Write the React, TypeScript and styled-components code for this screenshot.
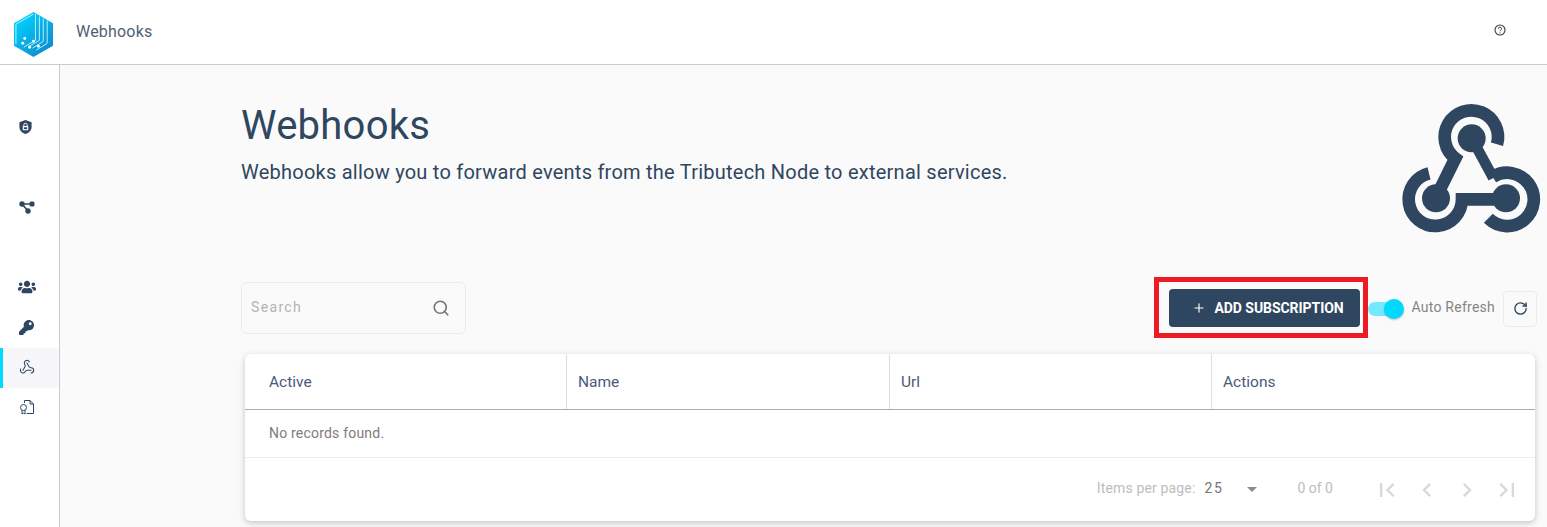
import React from 'react';
import styled, { createGlobalStyle } from 'styled-components';
import { FaKey, FaUsers } from 'react-icons/fa';
import { MdChevronLeft, MdChevronRight, MdFirstPage, MdLastPage } from 'react-icons/md';
import { Plus, RotateCw, Search, Webhook } from 'lucide-react';

const navy = '#2f4660';

const GlobalStyle = createGlobalStyle`
  html, body {
    margin: 0;
    height: 100%;
    overflow: hidden;
    background: #fafafa;
    font-family: Roboto, "Liberation Sans", sans-serif;
  }
  * { box-sizing: border-box; }
`;

const Shell = styled.div`
  height: 527px;
  display: flex;
  flex-direction: column;
`;

const TopBar = styled.header`
  height: 65px;
  flex: none;
  background: #fff;
  border-bottom: 1px solid #ccc;
  display: flex;
  align-items: center;
  padding: 0 41px 2px 13px;
`;

const LogoSlot = styled.div`
  display: flex;
  margin-top: 6px;
`;

const PageName = styled.span`
  margin-left: 22px;
  font-size: 16px;
  letter-spacing: 0.2px;
  color: #4f6275;
`;

const HelpButton = styled.button`
  margin: 0 0 2px auto;
  border: 0;
  padding: 0;
  background: none;
  display: flex;
`;

const Body = styled.div`
  flex: 1;
  display: flex;
  min-height: 0;
`;

const SideNav = styled.nav`
  width: 60px;
  flex: none;
  background: #fff;
  border-right: 1px solid #ccc;
  padding-top: 43px;
`;

const NavGroup = styled.div`
  margin-bottom: 40px;
`;

const NavItem = styled.div<{ $active?: boolean }>`
  height: 40px;
  display: flex;
  align-items: center;
  justify-content: center;
  padding: 0 9px 2px 0;
  color: ${navy};
  background: ${({ $active }) => ($active ? '#f7f7f9' : 'transparent')};
  border-left: 3px solid ${({ $active }) => ($active ? '#00d9ff' : 'transparent')};
`;

const ShieldSvg = styled.svg`
  width: 15px;
  height: 16px;
  margin-right: 3px;
`;

const Main = styled.main`
  flex: 1;
  min-width: 0;
  padding: 37px 0 0 181px;
  background: #fafafa;
`;

const Intro = styled.section`
  height: 175px;
  display: flex;
  justify-content: space-between;
  align-items: flex-start;
`;

const Title = styled.h1`
  margin: 0;
  font-size: 40px;
  line-height: 48px;
  font-weight: 400;
  letter-spacing: 0.25px;
  color: ${navy};
`;

const Subtitle = styled.p`
  margin: 8px 0 0;
  font-size: 20px;
  line-height: 28px;
  letter-spacing: 0.24px;
  color: ${navy};
`;

const HeroIcon = styled.svg`
  width: 167px;
  height: 150px;
  margin-top: -12px;
  flex: none;
`;

const Toolbar = styled.div`
  height: 61px;
  display: flex;
  align-items: center;
`;

const SearchBox = styled.div`
  width: 225px;
  height: 52px;
  margin-top: 1px;
  border: 1px solid #ececec;
  border-radius: 6px;
  display: flex;
  align-items: center;
  justify-content: space-between;
  padding: 0 15px 0 9px;
  color: #757575;
`;

const SearchInput = styled.input`
  width: 150px;
  margin-bottom: 2px;
  border: 0;
  outline: 0;
  background: none;
  padding: 0;
  font: 400 14px Roboto, sans-serif;
  letter-spacing: 1.35px;
  &::placeholder { color: #b4b4b4; opacity: 1; }
`;

const Highlight = styled.div`
  margin-left: auto;
  border: 5px solid #ed1c24;
  padding: 7px 3px 6px 10px;
`;

const AddButton = styled.button`
  width: 191px;
  height: 38px;
  border: 0;
  border-radius: 4px;
  background: ${navy};
  color: #fff;
  display: flex;
  align-items: center;
  padding: 0 0 1px 23px;
  font: 700 14px Roboto, sans-serif;
  letter-spacing: -0.05px;
  gap: 8px;
`;

const ToggleTrack = styled.span`
  position: relative;
  width: 34px;
  height: 14px;
  margin-top: 2px;
  border-radius: 7px;
  background: #73e9ff;
`;

const ToggleThumb = styled.span`
  position: absolute;
  right: -2px;
  top: -3px;
  width: 20px;
  height: 20px;
  border-radius: 50%;
  background: #00d9ff;
  box-shadow: 0 1px 2px rgba(0, 0, 0, 0.25);
`;

const ToggleLabel = styled.span`
  margin: 0 0 2px 9px;
  font-size: 14px;
  letter-spacing: 0.25px;
  color: #858585;
`;

const RefreshButton = styled.button`
  width: 34px;
  height: 36px;
  margin: 2px 10px 0 8px;
  border: 1px solid #ececec;
  border-radius: 4px;
  background: none;
  padding: 0;
  display: flex;
  align-items: center;
  justify-content: center;
  color: ${navy};
`;

const Card = styled.section`
  margin: 16px 12px 0 4px;
  height: 167px;
  background: #fff;
  border-radius: 6px;
  box-shadow: 0 2px 6px rgba(0, 0, 0, 0.22);
`;

const HeaderRow = styled.div`
  height: 56px;
  display: grid;
  grid-template-columns: 321px 323px 322px 1fr;
  border-bottom: 1px solid #a9adb2;
`;

const HeaderCell = styled.div<{ $first?: boolean }>`
  display: flex;
  align-items: center;
  padding-left: ${({ $first }) => ($first ? '24px' : '11px')};
  font-size: 15.5px;
  color: #4a5a78;
  border-left: ${({ $first }) => ($first ? '0' : '1px solid #dedede')};
`;

const EmptyRow = styled.div`
  height: 48px;
  display: flex;
  align-items: center;
  padding: 0 0 2px 24px;
  font-size: 14px;
  letter-spacing: 0.2px;
  color: #857a76;
  border-bottom: 1px solid #ececec;
`;

const Pager = styled.div`
  height: 62px;
  display: flex;
  align-items: center;
  justify-content: flex-end;
  padding: 0 8px 2px 0;
  font-size: 14px;
  color: #bdbdbd;
`;

const PageSizeLabel = styled.span`
  letter-spacing: 0.15px;
`;

const PerPage = styled.span`
  margin-left: 9px;
  width: 24px;
  letter-spacing: 1.6px;
  color: #757575;
`;

const Caret = styled.span`
  margin: 2px 0 0 19px;
  width: 0;
  height: 0;
  border-left: 5px solid transparent;
  border-right: 5px solid transparent;
  border-top: 5px solid #8c8c8c;
`;

const RangeLabel = styled.span`
  margin: 0 34px 0 40px;
`;

const PagerButton = styled.span`
  width: 40px;
  height: 40px;
  margin-top: 4px;
  display: flex;
  align-items: center;
  justify-content: center;
  font-size: 28px;
  color: #d9d9d9;
`;

const ringProps = { fill: 'none', stroke: navy, strokeWidth: 38 };

const HeroArt = () => (
  <>
    <path {...ringProps} d="M351 163A80 80 0 1 0 226 205L170 318" />
    <path {...ringProps} d="M147 250A80 80 0 1 0 246 328H378" />
    <path {...ringProps} d="M338 261A80 80 0 1 1 325 385" />
    <path fill="none" stroke={navy} strokeWidth="32" d="M278 150L340 264" />
    <circle cx="275" cy="145" r="42" fill={navy} />
    <circle cx="168" cy="325" r="42" fill={navy} />
    <circle cx="378" cy="325" r="42" fill={navy} />
  </>
);

const Logo = () => (
  <svg width="41" height="47" viewBox="0 0 42 48">
    <defs>
      <linearGradient id="hex" x1="0.1" y1="0.1" x2="0.8" y2="1">
        <stop offset="0" stopColor="#00d4ff" />
        <stop offset="1" stopColor="#1088cc" />
      </linearGradient>
    </defs>
    <path d="M21 1L41 12.500V35.500L21 47L1 35.500V12.500Z" fill="url(#hex)" />
    <g fill="none" stroke="#b8f0ff" strokeWidth="1">
      <path d="M3 34V13.500L21 3" />
      <path d="M23 3V30L11 37" />
      <path d="M27 5.500V30L16 36.500" />
      <path d="M31 7.500V31L20 38" />
      <path d="M35 9.500V33L24 40" />
    </g>
    <g fill="#fff">
      <circle cx="12" cy="28" r="1.500" />
      <circle cx="21" cy="31" r="1.500" />
      <circle cx="10" cy="33" r="1.500" />
      <circle cx="17" cy="37" r="1.500" />
      <circle cx="26" cy="36" r="1.500" />
    </g>
  </svg>
);

const HelpIcon = () => (
  <svg width="12" height="12" viewBox="0 0 12 12">
    <circle cx="6" cy="6" r="5" fill="none" stroke="#2f3a46" strokeWidth="1.100" />
    <path d="M4.400 4.800A1.600 1.600 0 1 1 6.500 6.300C6.100 6.500 6 6.800 6 7.300" fill="none" stroke="#2f3a46" strokeWidth="1" />
    <circle cx="6" cy="8.800" r="0.600" fill="#2f3a46" />
  </svg>
);

const ShieldLockIcon = () => (
  <ShieldSvg viewBox="0 0 16 16">
    <path d="M8 .5L14.500 3V8C14.500 11.500 11.800 14.400 8 15.500C4.200 14.400 1.500 11.500 1.500 8V3Z" fill={navy} />
    <rect x="5" y="7" width="6" height="4.500" rx="0.800" fill="#fff" />
    <path d="M6.200 7.500V5.800A1.800 1.800 0 0 1 9.800 5.800V7.500" fill="none" stroke="#fff" strokeWidth="1" />
    <rect x="6.200" y="8.300" width="3.600" height="2" fill={navy} />
  </ShieldSvg>
);

const NodesIcon = () => (
  <svg width="16" height="13" viewBox="0 0 16 13">
    <path d="M3 3H13M3 3L9 10" fill="none" stroke={navy} strokeWidth="1.600" />
    <circle cx="3" cy="3" r="2.700" fill={navy} />
    <rect x="10.500" y="0.500" width="5" height="5" rx="1.500" fill={navy} />
    <circle cx="9" cy="10" r="2.700" fill={navy} />
  </svg>
);

const CertificateIcon = () => (
  <svg width="16" height="16" viewBox="0 0 16 16" fill="none" stroke={navy} strokeWidth="1">
    <path d="M5.500 4V1.500H11L14.500 5V14.500H7.500" />
    <path d="M11 1.500V5H14.500" />
    <circle cx="4.500" cy="8.500" r="3" />
    <path d="M3 11V15L4.500 14L6 15V11" />
  </svg>
);

const App: React.FC = () => {
  return (
    <Shell>
      <GlobalStyle />
      <TopBar>
        <LogoSlot><Logo /></LogoSlot>
        <PageName>Webhooks</PageName>
        <HelpButton><HelpIcon /></HelpButton>
      </TopBar>
      <Body>
        <SideNav>
          <NavGroup>
            <NavItem><ShieldLockIcon /></NavItem>
          </NavGroup>
          <NavGroup>
            <NavItem><NodesIcon /></NavItem>
          </NavGroup>
          <NavItem><FaUsers size={18} /></NavItem>
          <NavItem><FaKey size={15} /></NavItem>
          <NavItem $active><Webhook size={16} strokeWidth={1.6} /></NavItem>
          <NavItem><CertificateIcon /></NavItem>
        </SideNav>
        <Main>
          <Intro>
            <div>
              <Title>Webhooks</Title>
              <Subtitle>Webhooks allow you to forward events from the Tributech Node to external services.</Subtitle>
            </div>
            <HeroIcon viewBox="0 0 501 450"><HeroArt /></HeroIcon>
          </Intro>
          <Toolbar>
            <SearchBox>
              <SearchInput placeholder="Search" />
              <Search size={18} strokeWidth={2.2} />
            </SearchBox>
            <Highlight>
              <AddButton><Plus size={14} strokeWidth={2} />ADD SUBSCRIPTION</AddButton>
            </Highlight>
            <ToggleTrack><ToggleThumb /></ToggleTrack>
            <ToggleLabel>Auto Refresh</ToggleLabel>
            <RefreshButton><RotateCw size={15} strokeWidth={2.2} /></RefreshButton>
          </Toolbar>
          <Card>
            <HeaderRow>
              <HeaderCell $first>Active</HeaderCell>
              <HeaderCell>Name</HeaderCell>
              <HeaderCell>Url</HeaderCell>
              <HeaderCell>Actions</HeaderCell>
            </HeaderRow>
            <EmptyRow>No records found.</EmptyRow>
            <Pager>
              <PageSizeLabel>Items per page:</PageSizeLabel>
              <PerPage>25</PerPage>
              <Caret />
              <RangeLabel>0 of 0</RangeLabel>
              <PagerButton><MdFirstPage /></PagerButton>
              <PagerButton><MdChevronLeft /></PagerButton>
              <PagerButton><MdChevronRight /></PagerButton>
              <PagerButton><MdLastPage /></PagerButton>
            </Pager>
          </Card>
        </Main>
      </Body>
    </Shell>
  );
};

export default App;
